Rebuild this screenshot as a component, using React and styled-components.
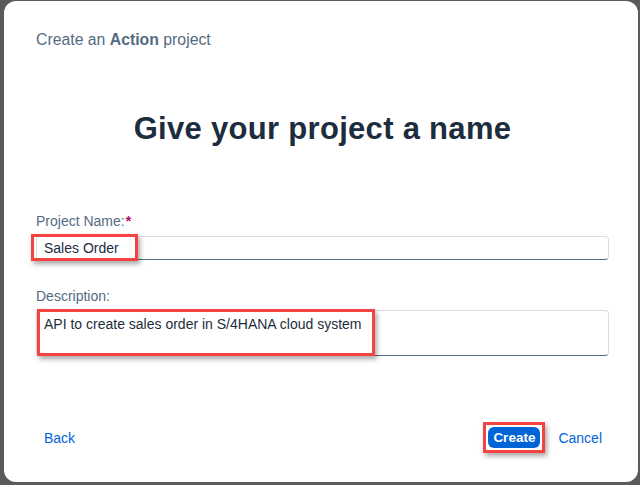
import React from "react";
import styled, { createGlobalStyle } from "styled-components";

const Global = createGlobalStyle`
  html, body {
    margin: 0;
    padding: 0;
    background: #595959;
    font-family: "Liberation Sans", Arial, sans-serif;
  }
`;

const Backdrop = styled.div`
  width: 640px;
  height: 485px;
  box-sizing: border-box;
  padding: 1px 2px 3px 4px;
  background: #5a5a5a;
`;

const Dialog = styled.div`
  height: 100%;
  box-sizing: border-box;
  background: #fff;
  border-radius: 12px;
  padding: 30px 29px 0 32px;
  display: flex;
  flex-direction: column;
`;

const Header = styled.div`
  font-size: 15.8px;
  color: #556b82;
  b {
    font-weight: bold;
  }
`;

const Title = styled.h1`
  margin: 62px 0 0;
  text-align: center;
  font-size: 31px;
  font-weight: bold;
  color: #1d2d3e;
  letter-spacing: 0.3px;
`;

const Field = styled.div`
  margin-top: ${(p) => p.$top}px;
`;

const Label = styled.div`
  font-size: 14px;
  color: #556b82;
  margin-bottom: ${(p) => p.$gap}px;
  span {
    color: #ba066c;
    font-weight: bold;
    margin-left: 1px;
  }
`;

const InputBox = styled.div`
  position: relative;
`;

const Input = styled.div`
  height: ${(p) => p.$h}px;
  box-sizing: border-box;
  border: 1px solid #d9dde2;
  border-bottom: 1px solid #556b82;
  border-radius: 4px;
  padding: ${(p) => (p.$multi ? "5px 7px" : "0 7px")};
  display: flex;
  align-items: ${(p) => (p.$multi ? "flex-start" : "center")};
  font-size: 14px;
  color: #1d2d3e;
`;

const Highlight = styled.div`
  position: absolute;
  left: ${(p) => p.$x}px;
  top: ${(p) => p.$y}px;
  width: ${(p) => p.$w}px;
  height: ${(p) => p.$h}px;
  box-sizing: border-box;
  border: 3px solid #f34343;
  box-shadow: 2px 3px 5px rgba(0, 0, 0, 0.35);
  pointer-events: none;
`;

const Footer = styled.div`
  margin-top: auto;
  height: 89px;
  display: flex;
  align-items: center;
  padding: 0 7px 0 8px;
  font-size: 14px;
`;

const Link = styled.span`
  color: #0064d9;
`;

const Right = styled.div`
  margin-left: auto;
  display: flex;
  align-items: center;
  gap: 18px;
`;

const ButtonWrap = styled.div`
  position: relative;
`;

const Primary = styled.button`
  background: #0064d9;
  color: #fff;
  border: none;
  border-radius: 6px;
  font-family: inherit;
  font-weight: bold;
  font-size: 13.5px;
  height: 21px;
  padding: 0 5px;
  display: block;
`;

export default function App() {
  return (
    <>
      <Global />
      <Backdrop>
        <Dialog>
          <Header>
            Create an <b>Action</b> project
          </Header>
          <Title>Give your project a name</Title>
          <Field $top={66}>
            <Label $gap={7}>
              Project Name:<span>*</span>
            </Label>
            <InputBox>
              <Input $h={24}>Sales Order</Input>
              <Highlight $x={-5} $y={-2} $w={107} $h={27} />
            </InputBox>
          </Field>
          <Field $top={28}>
            <Label $gap={6}>Description:</Label>
            <InputBox>
              <Input $h={46} $multi>
                API to create sales order in S/4HANA cloud system
              </Input>
              <Highlight $x={1} $y={-1} $w={338} $h={47} />
            </InputBox>
          </Field>
          <Footer>
            <Link>Back</Link>
            <Right>
              <ButtonWrap>
                <Primary>Create</Primary>
                <Highlight $x={-5} $y={-5} $w={62} $h={31} />
              </ButtonWrap>
              <Link>Cancel</Link>
            </Right>
          </Footer>
        </Dialog>
      </Backdrop>
    </>
  );
}
